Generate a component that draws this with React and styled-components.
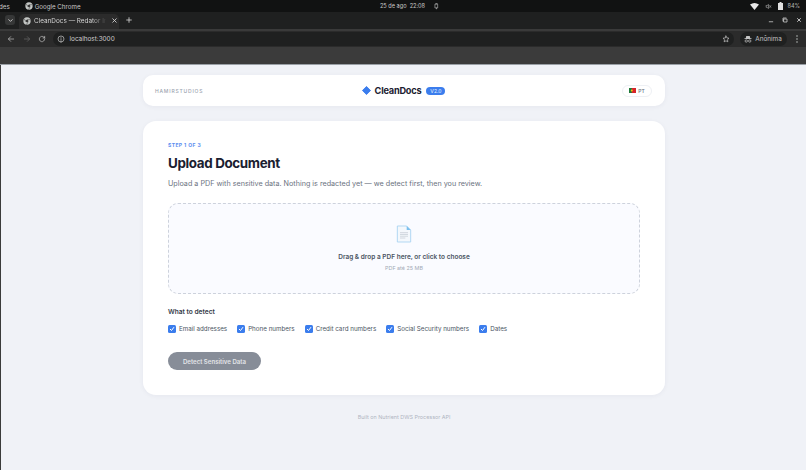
import React from "react";
import styled, { createGlobalStyle } from "styled-components";

const GlobalStyle = createGlobalStyle`
  html, body {
    margin: 0;
    padding: 0;
    width: 806px;
    height: 470px;
    overflow: hidden;
    background: #f0f2f7;
    font-family: "Inter", "Liberation Sans", sans-serif;
  }
  * { box-sizing: border-box; }
`;

const detectOptions = [
  "Email addresses",
  "Phone numbers",
  "Credit card numbers",
  "Social Security numbers",
  "Dates",
];

const Screen = styled.div`
  width: 806px;
  height: 470px;
  display: flex;
  flex-direction: column;
  overflow: hidden;
`;

const SystemBar = styled.div`
  height: 12px;
  flex: none;
  background: #111212;
  color: #c9c9c9;
  font-size: 6.2px;
  display: grid;
  grid-template-columns: 1fr auto 1fr;
  align-items: center;
`;

const SystemLeft = styled.div`
  display: flex;
  align-items: center;
  gap: 15px;
  margin-left: -1px;
`;

const ChromeApp = styled.div`
  display: flex;
  align-items: center;
  gap: 2px;
`;

const SystemClock = styled.div`
  display: flex;
  align-items: center;
  gap: 8px;
  padding-left: 14px;
  font-size: 5.6px;
`;

const SystemRight = styled.div`
  display: flex;
  align-items: center;
  justify-content: flex-end;
  gap: 6px;
  padding-right: 6px;
  color: #b5b5b5;
  font-size: 5.6px;
`;

const Percent = styled.span`
  margin-left: -2px;
`;

const TabStrip = styled.div`
  height: 17px;
  flex: none;
  background: #1f2020;
  display: flex;
  align-items: flex-end;
  padding-left: 5px;
  color: #d4d4d4;
`;

const TabMenu = styled.div`
  width: 10px;
  height: 10px;
  margin-bottom: 4px;
  border-radius: 3px;
  background: #363737;
  display: flex;
  align-items: center;
  justify-content: center;
`;

const Tab = styled.div`
  width: 100px;
  height: 15px;
  margin-left: 4px;
  padding: 0 3px 2px 4px;
  background: #2b2b2b;
  border-radius: 5px 5px 0 0;
  display: flex;
  align-items: center;
  gap: 3px;
  font-size: 6.4px;
  white-space: nowrap;
`;

const TabTitle = styled.span`
  flex: 1;
  -webkit-mask-image: linear-gradient(90deg, #000 78%, transparent 98%);
  mask-image: linear-gradient(90deg, #000 78%, transparent 98%);
`;

const NewTab = styled.div`
  margin: 0 0 4px 6px;
  height: 10px;
  display: flex;
  align-items: center;
`;

const WindowControls = styled.div`
  margin: 0 4px 4px auto;
  height: 10px;
  display: flex;
  align-items: center;
  gap: 8px;
`;

const Toolbar = styled.div`
  height: 18px;
  flex: none;
  background: #2b2b2b;
  border-top: 2px solid #3a3a3a;
  display: flex;
  align-items: center;
  padding: 0 8px 0 7px;
  gap: 7.5px;
  color: #c9c9c9;
`;

const AddressBar = styled.div`
  flex: 1;
  height: 14px;
  margin-left: -1px;
  background: #1f2020;
  border-radius: 7px;
  display: flex;
  align-items: center;
  padding: 0 4px;
  gap: 5px;
  font-size: 6.4px;
  color: #cfcfcf;
`;

const Url = styled.span`
  flex: 1;
`;

const Incognito = styled.div`
  height: 14px;
  width: 47px;
  margin-left: -2px;
  border-radius: 7px;
  background: #1f2020;
  display: flex;
  align-items: center;
  justify-content: center;
  gap: 3px;
  font-size: 6.4px;
  color: #c4c4c4;
`;

const Band = styled.div`
  height: 18px;
  flex: none;
  background: #3b3b3b;
  border-bottom: 1px solid #9aa0a6;
`;

const Page = styled.main`
  flex: 1;
  background: #f0f2f7;
  border-left: 1px solid #3b3b3b;
  display: flex;
  flex-direction: column;
  align-items: center;
  padding: 10px 0 0 1px;
  gap: 15px;
`;

const Card = styled.section`
  width: 522px;
  background: #ffffff;
  box-shadow: 0 1px 5px rgba(30, 40, 70, 0.05);
`;

const Header = styled(Card)`
  height: 31px;
  border-radius: 10px;
  display: grid;
  grid-template-columns: 1fr auto 1fr;
  align-items: center;
  padding: 0 13px 0 12px;
`;

const Studio = styled.span`
  font-size: 5px;
  font-weight: 500;
  letter-spacing: 0.8px;
  color: #9ca3af;
`;

const Brand = styled.div`
  display: flex;
  align-items: center;
`;

const BrandMark = styled.svg`
  width: 9px;
  height: 9px;
  margin-right: 4px;
`;

const BrandName = styled.span`
  font-size: 9.2px;
  font-weight: 700;
  letter-spacing: -0.2px;
  color: #1a2030;
`;

const Version = styled.span`
  margin-left: 5px;
  width: 19px;
  height: 8px;
  border-radius: 4px;
  background: #3b7ded;
  color: #dbe8ff;
  font-size: 5px;
  font-weight: 500;
  display: flex;
  align-items: center;
  justify-content: center;
`;

const LangButton = styled.div`
  justify-self: end;
  width: 30px;
  height: 12px;
  border: 1px solid #eef0f4;
  border-radius: 6px;
  display: flex;
  align-items: center;
  justify-content: center;
  gap: 2px;
  font-size: 5px;
  font-weight: 500;
  color: #6b7280;
`;

const Flag = styled.svg`
  width: 7px;
  height: 5px;
`;

const UploadCard = styled(Card)`
  height: 274px;
  border-radius: 13px;
  padding: 21px 25px 0;
`;

const Step = styled.div`
  font-size: 5px;
  line-height: 6px;
  font-weight: 700;
  letter-spacing: 0.4px;
  color: #5b8def;
`;

const Title = styled.h1`
  margin: 6px 0 0;
  font-size: 13.4px;
  line-height: 18px;
  font-weight: 700;
  letter-spacing: -0.35px;
  color: #1a2030;
`;

const Subtitle = styled.p`
  margin: 7px 0 0;
  font-size: 7.2px;
  line-height: 10px;
  color: #6b7280;
`;

const DropZone = styled.div`
  height: 91px;
  margin-top: 14px;
  border: 1px dashed #cdd2dc;
  border-radius: 10px;
  background: #fafbff;
  display: flex;
  flex-direction: column;
  align-items: center;
  padding-top: 21px;
`;

const FileIcon = styled.svg`
  width: 16px;
  height: 18px;
`;

const DropText = styled.div`
  margin-top: 9px;
  font-size: 6.5px;
  line-height: 10px;
  font-weight: 600;
  color: #4b5563;
`;

const DropHint = styled.div`
  margin-top: 2px;
  font-size: 5.4px;
  line-height: 9px;
  color: #a3aab6;
`;

const SectionLabel = styled.div`
  margin-top: 13px;
  font-size: 6.6px;
  line-height: 10px;
  font-weight: 600;
  color: #343b49;
`;

const Options = styled.div`
  margin-top: 7px;
  display: flex;
  gap: 10px;
`;

const Option = styled.label`
  display: flex;
  align-items: center;
  gap: 3px;
  height: 10px;
  font-size: 6.25px;
  color: #4b5563;
  white-space: nowrap;
`;

const CheckBox = styled.span`
  width: 8px;
  height: 8px;
  border-radius: 1.5px;
  background: #3b7ded;
  display: flex;
  align-items: center;
  justify-content: center;
`;

const DetectButton = styled.button`
  display: block;
  width: 93px;
  height: 18px;
  margin-top: 18px;
  padding: 0;
  border: none;
  border-radius: 9px;
  background: #878d98;
  color: #e3e5e9;
  font-family: inherit;
  font-size: 6.1px;
  font-weight: 600;
`;

const Footer = styled.footer`
  margin-top: 3px;
  font-size: 5.4px;
  line-height: 8px;
  color: #b0b6c2;
`;

const Glyph = styled.svg`
  display: block;
  flex: none;
  width: ${(p) => p.$size || 8}px;
  height: ${(p) => p.$size || 8}px;
  fill: none;
  stroke: currentColor;
  stroke-width: ${(p) => p.$weight || 2};
  stroke-linecap: round;
  stroke-linejoin: round;
`;

const icons = {
  chevron: <path d="M6 9l6 6 6-6" />,
  close: <path d="M6 6l12 12M18 6L6 18" />,
  plus: <path d="M12 5v14M5 12h14" />,
  minimize: <path d="M5 19h14" />,
  restore: <path d="M8 8h12v12H8zM4 16V4h12" />,
  back: <path d="M20 12H5M11 5l-7 7 7 7" />,
  reload: <path d="M20 12a8 8 0 1 1-2.4-5.6L20 9M20 4v5h-5" />,
  info: <path d="M12 21a9 9 0 1 0 0-18 9 9 0 0 0 0 18zM12 11v5M12 8v.1" />,
  star: <path d="M12 3l2.8 5.8 6.2.9-4.5 4.4 1 6.3-5.5-3-5.5 3 1-6.3L3 9.7l6.2-.9z" />,
  bell: <path d="M8 4h8v13H8zM12 17v3M10 2h4" />,
  sound: <path d="M4 9v6h3l5 4V5L7 9zM16 9l4 6M20 9l-4 6" />,
};

const Icon = ({ name, size, weight, style }) => (
  <Glyph viewBox="0 0 24 24" $size={size} $weight={weight} style={style}>
    {icons[name]}
  </Glyph>
);

const Globe = () => (
  <svg width="8" height="8" viewBox="0 0 24 24" style={{ flex: "none" }}>
    <circle cx="12" cy="12" r="11" fill="#c4c7c5" />
    <circle cx="12" cy="12" r="4" fill="#3a3a3a" />
    <path d="M12 8h10M8.5 14L3.5 5M15.5 14l-5 9" stroke="#3a3a3a" strokeWidth="1.6" />
  </svg>
);

const Wifi = () => (
  <svg width="9" height="7" viewBox="0 0 18 14">
    <path d="M0 3Q9-3 18 3L9 14z" fill="#e8e8e8" />
  </svg>
);

const Battery = () => (
  <svg width="5" height="8" viewBox="0 0 10 16">
    <path d="M3 0h4v2h3v14H0V2h3z" fill="#e0e0e0" />
  </svg>
);

const Kebab = () => (
  <svg width="2" height="8" viewBox="0 0 4 16" style={{ marginLeft: 2 }}>
    <circle cx="2" cy="2" r="1.5" fill="#c4c7c5" />
    <circle cx="2" cy="8" r="1.5" fill="#c4c7c5" />
    <circle cx="2" cy="14" r="1.5" fill="#c4c7c5" />
  </svg>
);

const IncognitoIcon = () => (
  <svg width="8" height="8" viewBox="0 0 16 16" fill="#c4c4c4">
    <path d="M4.5 2h7l1 4.5h2.5V8H1V6.5h2.5z" />
    <circle cx="4.5" cy="12" r="2.4" fill="none" stroke="#c4c4c4" strokeWidth="1.4" />
    <circle cx="11.5" cy="12" r="2.4" fill="none" stroke="#c4c4c4" strokeWidth="1.4" />
  </svg>
);

const App = () => (
  <Screen>
    <GlobalStyle />
    <SystemBar>
      <SystemLeft>
        <span>des</span>
        <ChromeApp>
          <Globe />
          Google Chrome
        </ChromeApp>
      </SystemLeft>
      <SystemClock>
        <span>25 de ago&nbsp;&nbsp;22:08</span>
        <Icon name="bell" size={7} />
      </SystemClock>
      <SystemRight>
        <Wifi />
        <Icon name="sound" size={7} />
        <Battery />
        <Percent>84%</Percent>
      </SystemRight>
    </SystemBar>

    <TabStrip>
      <TabMenu>
        <Icon name="chevron" size={7} weight={3} />
      </TabMenu>
      <Tab>
        <Globe />
        <TabTitle>CleanDocs — Redator In</TabTitle>
        <Icon name="close" size={7} weight={3} />
      </Tab>
      <NewTab>
        <Icon name="plus" size={8} weight={2.5} />
      </NewTab>
      <WindowControls>
        <Icon name="minimize" size={6} weight={3} />
        <Icon name="restore" size={6} weight={3} />
        <Icon name="close" size={6} weight={3.5} />
      </WindowControls>
    </TabStrip>

    <Toolbar>
      <Icon name="back" size={8} />
      <Icon name="back" size={8} style={{ transform: "scaleX(-1)", opacity: 0.4 }} />
      <Icon name="reload" size={8} />
      <AddressBar>
        <Icon name="info" size={8} />
        <Url>localhost:3000</Url>
        <Icon name="star" size={8} />
      </AddressBar>
      <Incognito>
        <IncognitoIcon />
        Anônima
      </Incognito>
      <Kebab />
    </Toolbar>

    <Band />

    <Page>
      <Header as="header">
        <Studio>HAMIRSTUDIOS</Studio>
        <Brand>
          <BrandMark viewBox="0 0 10 10">
            <path d="M5 .5L9.5 5 5 9.5.5 5z" fill="#3b7ded" stroke="#3b7ded" strokeLinejoin="round" />
          </BrandMark>
          <BrandName>CleanDocs</BrandName>
          <Version>V2.0</Version>
        </Brand>
        <LangButton>
          <Flag viewBox="0 0 7 5">
            <rect width="7" height="5" fill="#d8232a" />
            <rect width="2.8" height="5" fill="#1f7a3a" />
            <circle cx="2.8" cy="2.5" r="1" fill="#f0c419" />
          </Flag>
          PT
        </LangButton>
      </Header>

      <UploadCard>
        <Step>STEP 1 OF 3</Step>
        <Title>Upload Document</Title>
        <Subtitle>Upload a PDF with sensitive data. Nothing is redacted yet — we detect first, then you review.</Subtitle>

        <DropZone>
          <FileIcon viewBox="0 0 18 20">
            <path d="M1.5 1h10.5l4.5 4.5V19h-15z" fill="#f4f8fc" stroke="#a9d3f2" strokeWidth="1" strokeLinejoin="round" />
            <path d="M12 1v4.5h4.5z" fill="#7cc0ee" />
            <path d="M4.5 8.5h9M4.5 10.5h9M4.5 12.5h9M4.5 14.5h6" stroke="#c3c9d2" strokeWidth="0.8" />
          </FileIcon>
          <DropText>Drag &amp; drop a PDF here, or click to choose</DropText>
          <DropHint>PDF até 25 MB</DropHint>
        </DropZone>

        <SectionLabel>What to detect</SectionLabel>
        <Options>
          {detectOptions.map((label) => (
            <Option key={label}>
              <CheckBox>
                <svg width="6" height="6" viewBox="0 0 12 12" fill="none">
                  <path d="M2.5 6.5l2.5 2.5 4.5-6" stroke="#fff" strokeWidth="2" strokeLinecap="round" strokeLinejoin="round" />
                </svg>
              </CheckBox>
              {label}
            </Option>
          ))}
        </Options>

        <DetectButton>Detect Sensitive Data</DetectButton>
      </UploadCard>

      <Footer>Built on Nutrient DWS Processor API</Footer>
    </Page>
  </Screen>
);

export default App;
